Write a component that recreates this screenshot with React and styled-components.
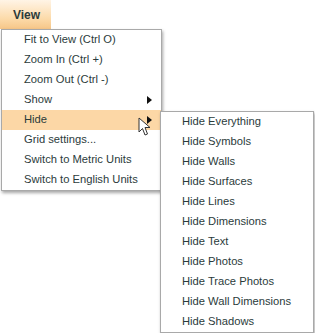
import React from 'react';
import styled, { createGlobalStyle } from 'styled-components';

const GlobalStyle = createGlobalStyle`
  html, body {
    margin: 0;
    padding: 0;
    background: #fff;
    font-family: "Liberation Sans", Arial, sans-serif;
  }
`;

const Page = styled.div`
  position: relative;
  width: 315px;
  height: 333px;
  overflow: hidden;
`;

const MenuButton = styled.div`
  display: flex;
  align-items: center;
  justify-content: center;
  width: 51px;
  height: 29px;
  box-sizing: border-box;
  padding-left: 2px;
  background: linear-gradient(#fff4e6, #fcdaa9 65%, #f6c688);
  color: #2b3b3b;
  font-weight: bold;
  font-size: 12px;
`;

const Menu = styled.div`
  position: absolute;
  left: ${(p) => p.left}px;
  top: ${(p) => p.top}px;
  width: ${(p) => p.width}px;
  box-sizing: border-box;
  display: flex;
  flex-direction: column;
  background: #fff;
  border: 1px solid #a9a9a9;
  box-shadow: 1px 2px 3px rgba(0, 0, 0, 0.35);
`;

const Item = styled.div`
  display: flex;
  align-items: center;
  justify-content: space-between;
  height: 20px;
  box-sizing: border-box;
  padding: 0 9px 2px ${(p) => p.indent}px;
  font-size: 11.2px;
  color: #2b3b3b;
  background: ${(p) => (p.active ? '#fcd7a6' : 'transparent')};
`;

const Arrow = styled.span`
  width: 0;
  height: 0;
  margin-top: 2px;
  border-top: 4px solid transparent;
  border-bottom: 4px solid transparent;
  border-left: 5px solid #111;
`;

const Cursor = styled.svg`
  position: absolute;
  left: 138px;
  top: 117px;
`;

const main = [
  'Fit to View (Ctrl O)',
  'Zoom In (Ctrl +)',
  'Zoom Out (Ctrl -)',
  'Show',
  'Hide',
  'Grid settings...',
  'Switch to Metric Units',
  'Switch to English Units',
];

const sub = [
  'Hide Everything',
  'Hide Symbols',
  'Hide Walls',
  'Hide Surfaces',
  'Hide Lines',
  'Hide Dimensions',
  'Hide Text',
  'Hide Photos',
  'Hide Trace Photos',
  'Hide Wall Dimensions',
  'Hide Shadows',
];

export default function App() {
  return (
    <Page>
      <GlobalStyle />
      <MenuButton>View</MenuButton>
      <Menu left={1} top={29} width={161}>
        {main.map((t) => (
          <Item key={t} indent={22} active={t === 'Hide'}>
            <span>{t}</span>
            {(t === 'Show' || t === 'Hide') && <Arrow />}
          </Item>
        ))}
      </Menu>
      <Menu left={160} top={111} width={154}>
        {sub.map((t) => (
          <Item key={t} indent={21}>
            <span>{t}</span>
          </Item>
        ))}
      </Menu>
      <Cursor width="14" height="20" viewBox="0 0 14 20">
        <path
          d="M1 1 L1 15 L4.5 11.5 L7 18 L9.5 17 L7 10.5 L12 10.5 Z"
          fill="#fff"
          stroke="#333"
          strokeWidth="1"
          strokeLinejoin="round"
        />
      </Cursor>
    </Page>
  );
}
